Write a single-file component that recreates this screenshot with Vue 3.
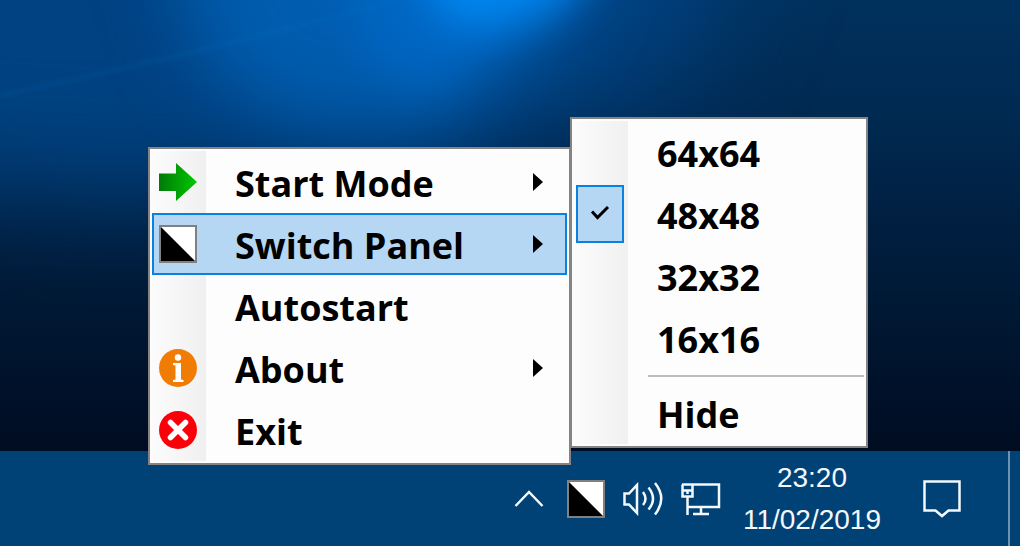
<script setup>
const mainItems = [
  { label: 'Start Mode', icon: 'arrow', sub: true },
  { label: 'Switch Panel', icon: 'panel', sub: true, active: true },
  { label: 'Autostart' },
  { label: 'About', icon: 'info', sub: true },
  { label: 'Exit', icon: 'close' },
]
const sizes = [
  { label: '64x64' },
  { label: '48x48', checked: true },
  { label: '32x32' },
  { label: '16x16' },
]
</script>

<template>
  <div class="desktop">
    <svg class="wallpaper" viewBox="0 0 1020 451" preserveAspectRatio="none" aria-hidden="true">
      <defs>
        <linearGradient id="base" x1="0" y1="0" x2="0" y2="1">
          <stop offset="0" stop-color="#00315d" />
          <stop offset="0.25" stop-color="#002a52" />
          <stop offset="0.5" stop-color="#001f40" />
          <stop offset="0.75" stop-color="#001630" />
          <stop offset="1" stop-color="#000c22" />
        </linearGradient>
        <filter id="wide" x="-50%" y="-50%" width="200%" height="200%" color-interpolation-filters="sRGB">
          <feGaussianBlur stdDeviation="55" />
        </filter>
        <filter id="soft" x="-50%" y="-50%" width="200%" height="200%" color-interpolation-filters="sRGB">
          <feGaussianBlur stdDeviation="38" />
        </filter>
        <filter id="mid" x="-50%" y="-50%" width="200%" height="200%" color-interpolation-filters="sRGB">
          <feGaussianBlur stdDeviation="22" />
        </filter>
        <filter id="line" x="-5%" y="-20%" width="110%" height="140%">
          <feGaussianBlur stdDeviation="2" />
        </filter>
      </defs>
      <rect width="1020" height="451" fill="url(#base)" />
      <path d="M-160-140H760L680 80L400 170L120 190L-160 170Z" fill="#004282" filter="url(#wide)" />
      <path d="M150-120H620L550 40L430 130L280 120L200 60Z" fill="#005cae" filter="url(#soft)" />
      <path d="M320-80H620L545 15L430 90L370 60Z" fill="#0068c6" opacity="0.8" filter="url(#mid)" />
      <path d="M400-70H620L555 5L480 28L440 15Z" fill="#0088f2" filter="url(#mid)" />
      <path d="M0 96L190 53L400 0" fill="none" stroke="#2288d8" stroke-opacity="0.15" stroke-width="3" filter="url(#line)" />
    </svg>

    <nav class="menu main-menu" aria-label="Tray menu">
      <button
        v-for="item in mainItems"
        :key="item.label"
        type="button"
        class="item"
        :class="{ active: item.active }"
      >
        <span class="slot">
          <svg v-if="item.icon === 'arrow'" class="icon" viewBox="0 0 38 38">
            <defs>
              <linearGradient id="green" x1="0" y1="0" x2="1" y2="0">
                <stop offset="0" stop-color="#007a08" />
                <stop offset="1" stop-color="#00c800" />
              </linearGradient>
            </defs>
            <path d="M0 10.5H17V0L38 19L17 38V28H0Z" fill="url(#green)" />
          </svg>
          <svg v-else-if="item.icon === 'panel'" class="icon" viewBox="0 0 38 38">
            <rect x="1" y="1" width="36" height="36" fill="#fff" stroke="#808080" stroke-width="2" />
            <path d="M2 2L36 36H2Z" />
          </svg>
          <svg v-else-if="item.icon === 'info'" class="icon" viewBox="0 0 38 38">
            <circle cx="19" cy="19" r="19" fill="#f07c04" />
            <circle cx="19" cy="8.5" r="3.2" fill="#fff" />
            <path d="M14 14H22V30.500L24.500 31V33H14V31L16.500 30.500V16.500L14 16Z" fill="#fff" />
          </svg>
          <svg v-else-if="item.icon === 'close'" class="icon" viewBox="0 0 38 38">
            <circle cx="19" cy="19" r="19" fill="#fa0008" />
            <path d="M11.500 11.500L26.500 26.500M26.500 11.500L11.500 26.500" stroke="#fff" stroke-width="5.500" stroke-linecap="round" />
          </svg>
        </span>
        <span class="label">{{ item.label }}</span>
        <svg v-if="item.sub" class="caret" viewBox="0 0 10 18"><path d="M0 0L10 9L0 18Z" /></svg>
      </button>
    </nav>

    <nav class="menu sub-menu" aria-label="Switch Panel">
      <button v-for="s in sizes" :key="s.label" type="button" class="item">
        <span class="slot">
          <span v-if="s.checked" class="check">
            <svg viewBox="0 0 20 16"><path d="M2 5.500L7.500 11.500L18 1" fill="none" stroke="#000" stroke-width="3" /></svg>
          </span>
        </span>
        <span class="label">{{ s.label }}</span>
      </button>
      <hr class="separator" />
      <button type="button" class="item">
        <span class="slot"></span>
        <span class="label">Hide</span>
      </button>
    </nav>

    <footer class="taskbar">
      <button type="button" class="tray chevron" aria-label="Show hidden icons">
        <svg width="30" height="18" viewBox="0 0 30 18"><path d="M1.500 16L15 2L28.500 16" /></svg>
      </button>
      <button type="button" class="tray" aria-label="Switch Panel">
        <svg width="38" height="38" viewBox="0 0 38 38">
          <rect x="1" y="1" width="36" height="36" fill="#fff" stroke="#808080" stroke-width="2" />
          <path class="solid" d="M2 2L36 36H2Z" />
        </svg>
      </button>
      <button type="button" class="tray" aria-label="Volume">
        <svg width="40" height="34" viewBox="0 0 40 34">
          <path d="M1.500 11.500H6L14 3V31L6 22.500H1.500Z" />
          <path d="M20 10Q25 17 20 23M25.500 5.500Q34.500 17 25.500 27.500M32 1Q44.500 16.500 32 32.500" />
        </svg>
      </button>
      <button type="button" class="tray" aria-label="Network">
        <svg width="40" height="34" viewBox="0 0 40 34">
          <path d="M1 2.500H38V25H7M20 25V32M12 32H28M6.500 15V33M11.500 2.500V14.500H1.500V2.500M1.500 8.500H11.500" />
          <path d="M6.500 9V12" />
        </svg>
      </button>
      <button type="button" class="clock">
        <span>23:20</span>
        <span>11/02/2019</span>
      </button>
      <button type="button" class="tray notes" aria-label="Notifications">
        <svg width="38" height="38" viewBox="0 0 38 38">
          <path d="M1.500 1.500H36.500V30.500H25.500L19 36L12.500 30.500H1.500Z" />
        </svg>
      </button>
      <button type="button" class="show-desktop" aria-label="Show desktop"></button>
    </footer>
  </div>
</template>

<style>
body {
  margin: 0;
}
</style>

<style scoped>
.desktop {
  position: relative;
  display: flex;
  flex-direction: column;
  min-height: 100vh;
  overflow: hidden;
  background: #000c22;
}
button {
  margin: 0;
  padding: 0;
  border: 0;
  background: none;
  color: inherit;
  font: inherit;
}
svg {
  display: block;
}
.wallpaper {
  flex: 1;
  width: 100%;
  min-height: 0;
  height: 0;
}
.menu {
  position: absolute;
  box-sizing: border-box;
  border: 2px solid #868482;
  padding: 2px;
  background: linear-gradient(90deg, #fcfcfc, #f0f0f0) 0 2px / 56px calc(100% - 4px) no-repeat #fdfdfd;
  color: #000;
  font: bold 36px/54px "Open Sans", "Noto Sans", sans-serif;
}
.main-menu {
  right: 449px;
  bottom: 81px;
  width: 423px;
}
.sub-menu {
  right: 152px;
  bottom: 98px;
  width: 298px;
}
.item {
  box-sizing: border-box;
  display: flex;
  align-items: center;
  width: 100%;
  height: 62px;
  border: 2px solid transparent;
  text-align: left;
}
.item.active {
  border-color: #0a80e0;
  background: #b5d7f3;
}
.slot {
  display: flex;
  align-items: center;
  justify-content: center;
  width: 48px;
  flex: none;
}
.icon {
  width: 38px;
  height: 38px;
}
.label {
  flex: 1;
  padding: 4px 0 0 33px;
}
.caret {
  width: 10px;
  height: 18px;
  margin-right: 22px;
}
.check {
  box-sizing: border-box;
  display: flex;
  align-items: center;
  justify-content: center;
  width: 48px;
  height: 58px;
  border: 2px solid #0a80e0;
  background: #b5d7f3;
}
.check svg {
  width: 20px;
  height: 16px;
}
.separator {
  height: 2px;
  margin: 6px 0 5px 74px;
  border: 0;
  background: #bdbdbd;
}
.taskbar {
  display: flex;
  align-items: center;
  justify-content: flex-end;
  height: 95px;
  background: #004275;
  color: #f4f8fc;
}
.tray {
  margin-right: 18px;
}
.tray path {
  fill: none;
  stroke: #f4f8fc;
  stroke-width: 2.5;
}
.tray .solid {
  fill: #000;
  stroke: none;
}
.chevron {
  margin-right: 23px;
}
.clock {
  display: flex;
  flex-direction: column;
  align-items: center;
  margin: 0 42px 0 4px;
  font: 28px/42px "Liberation Sans", Arial, sans-serif;
}
.notes {
  margin-right: 47px;
}
.show-desktop {
  align-self: stretch;
  width: 12px;
  border-left: 2px solid #7192ae;
}
</style>
